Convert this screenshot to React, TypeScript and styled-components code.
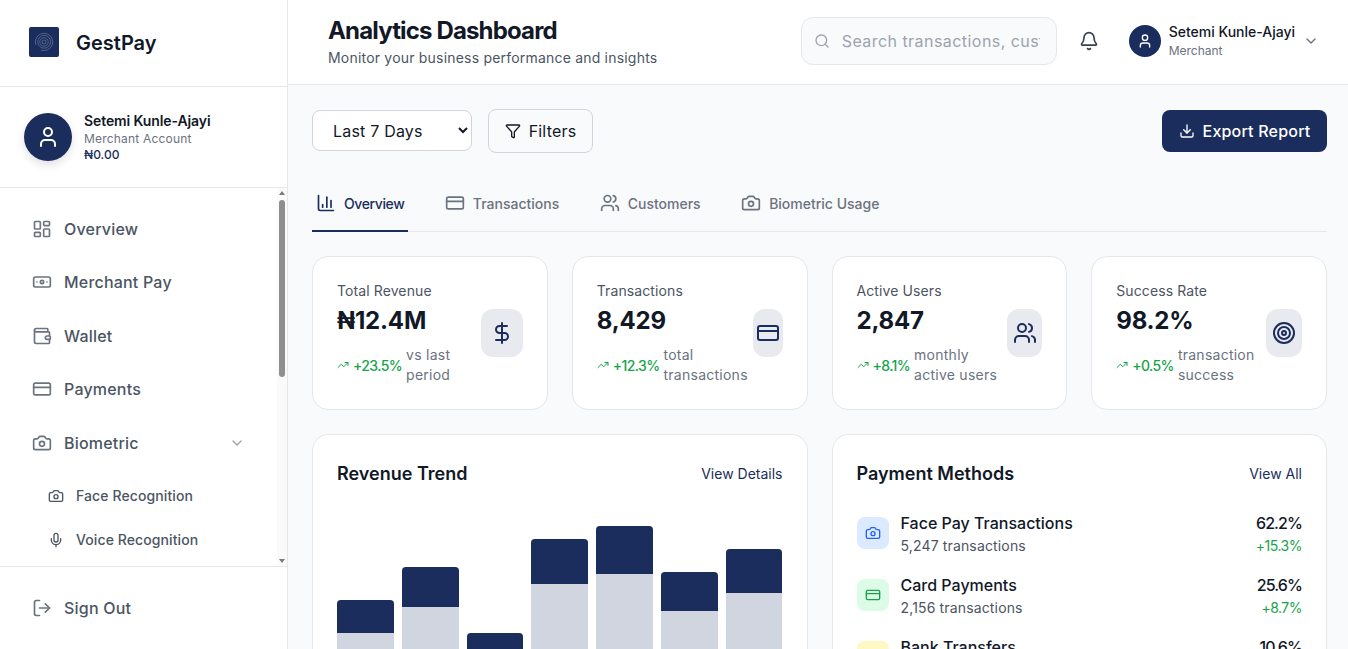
import React from "react";
import styled, { createGlobalStyle } from "styled-components";
import {
  Banknote,
  Bell,
  Camera,
  ChartColumn,
  ChevronDown,
  CreditCard,
  DollarSign,
  Download,
  Filter,
  LayoutDashboard,
  LogOut,
  Mic,
  Search,
  Target,
  TrendingUp,
  User,
  Users,
  Wallet,
} from "lucide-react";

const navy = "#1a2d5c";

const GlobalStyle = createGlobalStyle`
  * { box-sizing: border-box; }
  html, body { margin: 0; height: 100%; overflow: hidden; }
  body {
    font-family: Inter, "Liberation Sans", sans-serif;
    background: #f9fafb;
    color: #111827;
  }
`;

const Shell = styled.div`
  display: flex;
  width: 1348px;
  height: 649px;
  overflow: hidden;
`;

/* sidebar */
const Sidebar = styled.aside`
  width: 288px;
  flex: none;
  display: flex;
  flex-direction: column;
  background: #fff;
  border-right: 1px solid #e5e7eb;
`;

const Brand = styled.div`
  height: 87px;
  flex: none;
  display: flex;
  align-items: center;
  gap: 17px;
  padding: 0 0 2px 29px;
  border-bottom: 1px solid #e5e7eb;
`;

const BrandName = styled.span`
  margin-top: 2px;
  font-size: 20px;
  font-weight: 600;
  color: #111827;
`;

const Profile = styled.div`
  height: 101px;
  flex: none;
  display: flex;
  align-items: center;
  gap: 12px;
  padding: 0 24px;
  border-bottom: 1px solid #e5e7eb;
`;

const Avatar = styled.div<{ $size: number }>`
  width: ${(p) => p.$size}px;
  height: ${(p) => p.$size}px;
  flex: none;
  border-radius: 50%;
  background: ${navy};
  color: #fff;
  display: flex;
  align-items: center;
  justify-content: center;
  box-shadow: ${(p) => (p.$size > 40 ? "0 4px 8px rgba(0,0,0,0.12)" : "none")};
`;

const ProfileName = styled.div`
  font-size: 14px;
  line-height: 18px;
  font-weight: 600;
  letter-spacing: -0.1px;
  color: #111827;
`;

const ProfileRole = styled.div`
  margin-top: 1px;
  font-size: 12px;
  line-height: 16px;
  letter-spacing: 0.2px;
  color: #6b7280;
`;

const ProfileBalance = styled.div`
  font-size: 12px;
  line-height: 16px;
  font-weight: 500;
  color: ${navy};
`;

const NavArea = styled.div`
  position: relative;
  flex: 1;
  min-height: 0;
`;

const Nav = styled.nav`
  height: 100%;
  overflow: hidden;
  padding: 14px 16px 0;
`;

const ScrollTrack = styled.div`
  position: absolute;
  top: 0;
  right: 0;
  bottom: 0;
  width: 10px;
  background: #fafafa;
`;

const ScrollThumb = styled.div`
  position: absolute;
  top: 12px;
  left: 2px;
  width: 6px;
  height: 177px;
  border-radius: 3px;
  background: #8f8f8f;
`;

const ScrollArrow = styled.div<{ $down?: boolean }>`
  position: absolute;
  left: 2px;
  ${(p) => (p.$down ? "bottom: 3px;" : "top: 3px;")}
  width: 0;
  height: 0;
  border-left: 3px solid transparent;
  border-right: 3px solid transparent;
  ${(p) => (p.$down ? "border-top: 4px solid #7a7a7a;" : "border-bottom: 4px solid #7a7a7a;")}
`;

const NavItem = styled.div`
  height: 53.5px;
  display: flex;
  align-items: center;
  gap: 12px;
  padding: 0 16px;
  font-size: 16px;
  font-weight: 500;
  color: #4b5563;
  letter-spacing: 0.2px;

  svg { flex: none; color: #6b7280; }
`;

const NavCaret = styled(ChevronDown)`
  margin-left: auto;
  margin-right: 10px;
  color: #9ca3af !important;
`;

const SubNav = styled.div`
  display: flex;
  flex-direction: column;
  margin-top: 4px;
`;

const SubItem = styled.div`
  height: 44px;
  display: flex;
  align-items: center;
  gap: 12px;
  padding-left: 32px;
  font-size: 14px;
  font-weight: 500;
  color: #4b5563;
  letter-spacing: 0.1px;

  svg { flex: none; color: #4b5563; }
`;

const SidebarFoot = styled.div`
  height: 83px;
  flex: none;
  padding: 14px 16px 0;
  border-top: 1px solid #e5e7eb;
`;

/* main */
const Main = styled.main`
  flex: 1;
  min-width: 0;
  display: flex;
  flex-direction: column;
  overflow: hidden;
`;

const Header = styled.header`
  height: 85px;
  flex: none;
  display: flex;
  align-items: center;
  padding: 0 29px 2px 40px;
  background: #fff;
  border-bottom: 1px solid #e5e7eb;
`;

const HeaderTitles = styled.div`
  flex: 1;
  margin-top: 1px;
`;

const PageTitle = styled.h1`
  margin: 0;
  font-size: 24px;
  line-height: 32px;
  font-weight: 700;
  letter-spacing: -0.85px;
  color: #111827;
`;

const PageSub = styled.p`
  margin: 1px 0 0;
  font-size: 14px;
  line-height: 20px;
  color: #4b5563;
  letter-spacing: 0.2px;
`;

const SearchBox = styled.div`
  width: 256px;
  height: 48px;
  display: flex;
  align-items: center;
  gap: 12px;
  padding: 0 16px 0 12px;
  background: #f9fafb;
  border: 1px solid #e5e7eb;
  border-radius: 12px;
  color: #9ca3af;
`;

const SearchInput = styled.input`
  flex: 1;
  min-width: 0;
  border: 0;
  padding: 0;
  outline: 0;
  background: transparent;
  font: 400 16px Inter, sans-serif;
  letter-spacing: 0.45px;

  &::placeholder { color: #9ca3af; opacity: 1; }
`;

const BellButton = styled.div`
  margin: 0 30px 0 22px;
  display: flex;
  color: #374151;
`;

const HeaderUser = styled.div`
  display: flex;
  align-items: center;
  gap: 8px;
`;

const HeaderName = styled.div`
  font-size: 14px;
  line-height: 18px;
  font-weight: 500;
  color: #111827;
`;

const HeaderRole = styled.div`
  margin-top: 2px;
  font-size: 12px;
  line-height: 16px;
  color: #6b7280;
`;

const HeaderCaret = styled(ChevronDown)`
  color: #6b7280;
`;

const Content = styled.div`
  padding: 24px 21px 24px 24px;
`;

const Toolbar = styled.div`
  display: flex;
  align-items: center;
  gap: 16px;
`;

const RangeSelect = styled.select`
  width: 160px;
  height: 41px;
  align-self: flex-start;
  margin-top: 1px;
  padding: 0 8px 0 16px;
  background: #fff;
  border: 1px solid #d1d5db;
  border-radius: 8px;
  font: 400 16px Inter, sans-serif;
  letter-spacing: 0.2px;
  color: #111827;
  outline: 0;
`;

const FilterButton = styled.button`
  width: 105px;
  height: 44px;
  display: flex;
  align-items: center;
  justify-content: center;
  gap: 8px;
  background: transparent;
  border: 1px solid #d1d5db;
  border-radius: 8px;
  font: 400 16px Inter, sans-serif;
  letter-spacing: 0.2px;
  color: #111827;
`;

const ExportButton = styled.button`
  margin-left: auto;
  width: 165px;
  height: 42px;
  display: flex;
  align-items: center;
  justify-content: center;
  gap: 8px;
  background: ${navy};
  border: 0;
  border-radius: 8px;
  font: 500 16px Inter, sans-serif;
  letter-spacing: 0.2px;
  color: #fff;
`;

const Tabs = styled.div`
  display: flex;
  gap: 32.5px;
  margin-top: 24px;
  height: 55px;
  border-bottom: 1px solid #e5e7eb;
`;

const Tab = styled.div<{ $active?: boolean }>`
  height: 55px;
  display: flex;
  align-items: center;
  gap: 8px;
  padding: 0 4px 1px;
  font-size: 14px;
  font-weight: 500;
  letter-spacing: ${(p) => (p.$active ? "-0.4px" : "0")};
  color: ${(p) => (p.$active ? navy : "#6b7280")};
  border-bottom: 2px solid ${(p) => (p.$active ? navy : "transparent")};
`;

const StatsGrid = styled.div`
  display: grid;
  grid-template-columns: repeat(4, 1fr);
  gap: 24px;
  margin-top: 24px;
`;

const Card = styled.section`
  background: #fff;
  border: 1px solid #e5e7eb;
  border-radius: 16px;
`;

const StatCard = styled(Card)`
  height: 154px;
  padding: 24px;
  display: flex;
  align-items: center;
  justify-content: space-between;
`;

const StatLabel = styled.div`
  font-size: 14px;
  line-height: 20px;
  letter-spacing: 0.1px;
  color: #4b5563;
`;

const StatValue = styled.div`
  margin-top: 4px;
  font-size: 24px;
  line-height: 32px;
  font-weight: 700;
  letter-spacing: -0.2px;
  color: #111827;
`;

const StatDelta = styled.div`
  margin-top: 8px;
  display: flex;
  align-items: center;
  gap: 4px;
  color: #16a34a;
  svg { flex: none; }
`;

const DeltaValue = styled.span`
  font-size: 14px;
  font-weight: 500;
  letter-spacing: -0.6px;
`;

const DeltaNote = styled.span`
  font-size: 14px;
  line-height: 20px;
  letter-spacing: 0.25px;
  color: #6b7280;
  white-space: pre-line;
`;

const StatIcon = styled.div<{ $width: number }>`
  width: ${(p) => p.$width}px;
  height: 48px;
  flex: none;
  display: flex;
  align-items: center;
  justify-content: center;
  background: #e8eaef;
  border-radius: 12px;
  color: ${navy};
`;

const PanelGrid = styled.div`
  display: grid;
  grid-template-columns: repeat(2, 1fr);
  gap: 24px;
  margin-top: 24px;
`;

const Panel = styled(Card)`
  padding: 24px;
`;

const PanelHead = styled.div`
  display: flex;
  align-items: center;
  justify-content: space-between;
  height: 28px;
`;

const PanelTitle = styled.h2`
  margin: 0;
  font-size: 18px;
  font-weight: 600;
  color: #111827;
`;

const PanelLink = styled.a`
  font-size: 14px;
  font-weight: 400;
  color: ${navy};
`;

const Chart = styled.div`
  height: 240px;
  margin-top: 23px;
  display: flex;
  align-items: flex-end;
  gap: 8px;
`;

const Bar = styled.div<{ $height: number }>`
  flex: 1;
  height: ${(p) => p.$height}px;
  display: flex;
  flex-direction: column;
  background: #d1d5df;
  border-radius: 4px 4px 0 0;
  overflow: hidden;
`;

const BarCap = styled.div<{ $height: number }>`
  height: ${(p) => p.$height}px;
  background: ${navy};
`;

const MethodList = styled.div`
  display: flex;
  flex-direction: column;
  gap: 16px;
  margin-top: 23px;
`;

const MethodRow = styled.div`
  height: 46px;
  display: flex;
  align-items: center;
  gap: 12px;
`;

const MethodIcon = styled.div<{ $bg: string; $fg: string }>`
  width: 32px;
  height: 32px;
  flex: none;
  display: flex;
  align-items: center;
  justify-content: center;
  border-radius: 8px;
  background: ${(p) => p.$bg};
  color: ${(p) => p.$fg};
`;

const MethodText = styled.div`
  flex: 1;
`;

const MethodName = styled.div`
  font-size: 16px;
  line-height: 24px;
  font-weight: 500;
  color: #111827;
`;

const MethodSub = styled.div`
  margin-top: 1px;
  font-size: 14px;
  line-height: 20px;
  letter-spacing: 0.15px;
  color: #4b5563;
`;

const MethodFigures = styled.div`
  text-align: right;
`;

const MethodShare = styled(MethodName)`
  letter-spacing: -0.9px;
`;

const MethodChange = styled.div`
  margin-top: 1px;
  font-size: 14px;
  line-height: 20px;
  letter-spacing: -0.5px;
  color: #16a34a;
`;

function BrandMark() {
  return (
    <svg width="30" height="30" viewBox="0 0 30 30">
      <rect width="30" height="30" rx="2" fill={navy} />
      <g fill="none" stroke="#8e9cc0" strokeOpacity="0.6" strokeWidth="0.8">
        <circle cx="15" cy="15" r="2" />
        <circle cx="15" cy="15" r="4.2" />
        <circle cx="15.2" cy="14.8" r="6.4" />
        <path d="M7 18a8.6 8.6 0 1 1 5 5" />
      </g>
    </svg>
  );
}

const stats = [
  { label: "Total Revenue", value: "₦12.4M", delta: "+23.5%", note: "vs last\nperiod", icon: DollarSign, iconWidth: 42 },
  { label: "Transactions", value: "8,429", delta: "+12.3%", note: "total\ntransactions", icon: CreditCard, iconWidth: 30 },
  { label: "Active Users", value: "2,847", delta: "+8.1%", note: "monthly\nactive users", icon: Users, iconWidth: 35 },
  { label: "Success Rate", value: "98.2%", delta: "+0.5%", note: "transaction\nsuccess", icon: Target, iconWidth: 36 },
];

const bars = [
  { total: 150, cap: 33 },
  { total: 183, cap: 40 },
  { total: 117, cap: 26 },
  { total: 211, cap: 45 },
  { total: 224, cap: 48 },
  { total: 178, cap: 39 },
  { total: 201, cap: 44 },
];

const methods = [
  { name: "Face Pay Transactions", sub: "5,247 transactions", share: "62.2%", change: "+15.3%", icon: Camera, bg: "#dbeafe", fg: "#2563eb" },
  { name: "Card Payments", sub: "2,156 transactions", share: "25.6%", change: "+8.7%", icon: CreditCard, bg: "#dcfce7", fg: "#16a34a" },
  { name: "Bank Transfers", sub: "1,026 transactions", share: "10.6%", change: "+2.1%", icon: Banknote, bg: "#fef9c3", fg: "#ca8a04" },
];

export default function App() {
  return (
    <Shell>
      <GlobalStyle />
      <Sidebar>
        <Brand>
          <BrandMark />
          <BrandName>GestPay</BrandName>
        </Brand>
        <Profile>
          <Avatar $size={48}>
            <User size={24} />
          </Avatar>
          <div>
            <ProfileName>Setemi Kunle-Ajayi</ProfileName>
            <ProfileRole>Merchant Account</ProfileRole>
            <ProfileBalance>₦0.00</ProfileBalance>
          </div>
        </Profile>
        <NavArea>
          <Nav>
            <NavItem><LayoutDashboard size={20} />Overview</NavItem>
            <NavItem><Banknote size={20} />Merchant Pay</NavItem>
            <NavItem><Wallet size={20} />Wallet</NavItem>
            <NavItem><CreditCard size={20} />Payments</NavItem>
            <NavItem><Camera size={20} />Biometric<NavCaret size={16} /></NavItem>
            <SubNav>
              <SubItem><Camera size={16} />Face Recognition</SubItem>
              <SubItem><Mic size={16} />Voice Recognition</SubItem>
            </SubNav>
          </Nav>
          <ScrollTrack>
            <ScrollArrow />
            <ScrollThumb />
            <ScrollArrow $down />
          </ScrollTrack>
        </NavArea>
        <SidebarFoot>
          <NavItem><LogOut size={20} />Sign Out</NavItem>
        </SidebarFoot>
      </Sidebar>
      <Main>
        <Header>
          <HeaderTitles>
            <PageTitle>Analytics Dashboard</PageTitle>
            <PageSub>Monitor your business performance and insights</PageSub>
          </HeaderTitles>
          <SearchBox>
            <Search size={16} />
            <SearchInput placeholder="Search transactions, customers..." />
          </SearchBox>
          <BellButton><Bell size={20} /></BellButton>
          <HeaderUser>
            <Avatar $size={32}><User size={16} /></Avatar>
            <div>
              <HeaderName>Setemi Kunle-Ajayi</HeaderName>
              <HeaderRole>Merchant</HeaderRole>
            </div>
            <HeaderCaret size={16} />
          </HeaderUser>
        </Header>
        <Content>
          <Toolbar>
            <RangeSelect defaultValue="7">
              <option value="7">Last 7 Days</option>
              <option value="30">Last 30 Days</option>
            </RangeSelect>
            <FilterButton><Filter size={16} />Filters</FilterButton>
            <ExportButton><Download size={16} />Export Report</ExportButton>
          </Toolbar>
          <Tabs>
            <Tab $active><ChartColumn size={20} />Overview</Tab>
            <Tab><CreditCard size={20} />Transactions</Tab>
            <Tab><Users size={20} />Customers</Tab>
            <Tab><Camera size={20} />Biometric Usage</Tab>
          </Tabs>
          <StatsGrid>
            {stats.map((s) => (
              <StatCard key={s.label}>
                <div>
                  <StatLabel>{s.label}</StatLabel>
                  <StatValue>{s.value}</StatValue>
                  <StatDelta>
                    <TrendingUp size={12} />
                    <DeltaValue>{s.delta}</DeltaValue>
                    <DeltaNote>{s.note}</DeltaNote>
                  </StatDelta>
                </div>
                <StatIcon $width={s.iconWidth}><s.icon size={24} /></StatIcon>
              </StatCard>
            ))}
          </StatsGrid>
          <PanelGrid>
            <Panel>
              <PanelHead>
                <PanelTitle>Revenue Trend</PanelTitle>
                <PanelLink>View Details</PanelLink>
              </PanelHead>
              <Chart>
                {bars.map((b, i) => (
                  <Bar key={i} $height={b.total}><BarCap $height={b.cap} /></Bar>
                ))}
              </Chart>
            </Panel>
            <Panel>
              <PanelHead>
                <PanelTitle>Payment Methods</PanelTitle>
                <PanelLink>View All</PanelLink>
              </PanelHead>
              <MethodList>
                {methods.map((m) => (
                  <MethodRow key={m.name}>
                    <MethodIcon $bg={m.bg} $fg={m.fg}><m.icon size={16} /></MethodIcon>
                    <MethodText>
                      <MethodName>{m.name}</MethodName>
                      <MethodSub>{m.sub}</MethodSub>
                    </MethodText>
                    <MethodFigures>
                      <MethodShare>{m.share}</MethodShare>
                      <MethodChange>{m.change}</MethodChange>
                    </MethodFigures>
                  </MethodRow>
                ))}
              </MethodList>
            </Panel>
          </PanelGrid>
        </Content>
      </Main>
    </Shell>
  );
}
